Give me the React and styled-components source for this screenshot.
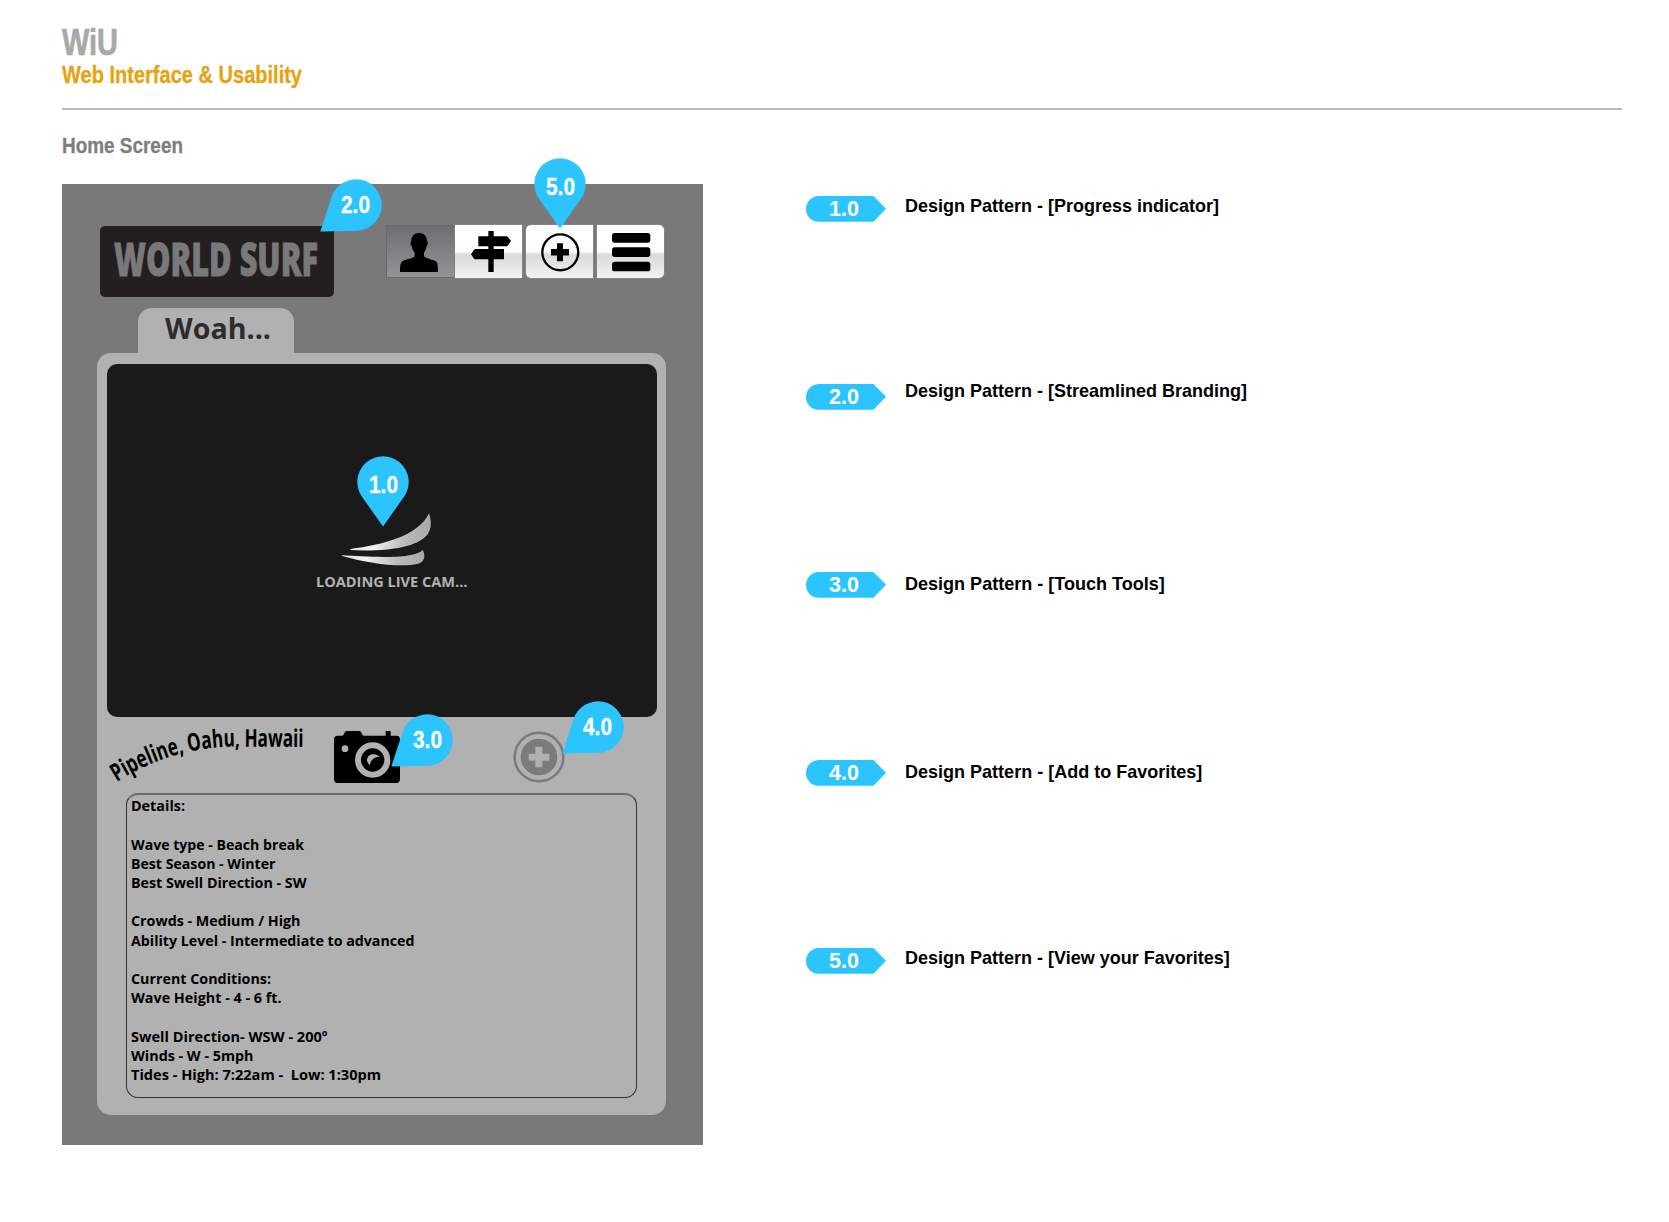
import React, { useLayoutEffect, useRef, useState } from "react";
import styled, { createGlobalStyle } from "styled-components";

const GlobalStyle = createGlobalStyle`
  * { box-sizing: border-box; }
  body { margin: 0; background: #fff; font-family: "Liberation Sans", Arial, sans-serif; font-weight: 700; }
  svg { display: block; overflow: visible; }
  h1, h2, h3, p { margin: 0; font: inherit; }
`;

const humanist = `"Open Sans", "Noto Sans", sans-serif`;

/* Condenses or widens a line of text to a given measure. */
const FitBox = styled.span`
  display: block;
  width: ${(p) => p.$width}px;
  white-space: pre;
`;
const FitInner = styled.span`
  display: inline-block;
  transform-origin: 0 50%;
  vertical-align: top;
`;
function Fit({ width, children }) {
  const ref = useRef(null);
  const [scale, setScale] = useState(1);
  useLayoutEffect(() => {
    const measure = () => {
      const box = getComputedStyle(ref.current);
      setScale(width / parseFloat(box.width));
    };
    measure();
    document.fonts?.ready.then(measure);
  }, [width, children]);
  return (
    <FitBox $width={width}>
      <FitInner ref={ref} style={{ transform: `scaleX(${scale})` }}>{children}</FitInner>
    </FitBox>
  );
}

const Page = styled.div`
  width: 1669px;
  height: 1222px;
  padding: 22px 47px 0 62px;
  overflow: hidden;
`;
const Header = styled.header`
  border-bottom: 2px solid #bababa;
  padding-bottom: 20px;
`;
const Brand = styled.h1`
  font-size: 37.8px;
  line-height: 40px;
  color: #a8a8a8;
  -webkit-text-stroke: 0.7px #a8a8a8;
`;
const Subtitle = styled.h2`
  font-size: 23px;
  line-height: 26px;
  color: #e6a311;
  -webkit-text-stroke: 0.3px #e6a311;
`;
const ScreenTitle = styled.h3`
  margin: 23px 0 25.4px;
  font-size: 22.4px;
  line-height: 26px;
  color: #7e7e7e;
  -webkit-text-stroke: 0.3px #7e7e7e;
`;
const Body = styled.main`
  display: flex;
  gap: 103.5px;
`;

const Phone = styled.section`
  position: relative;
  width: 640.5px;
  height: 960.6px;
  padding: 41px 0 0 35px;
  background: #797979;
`;
const TopBar = styled.div`
  display: flex;
  align-items: flex-start;
  height: 83px;
  padding-left: 3.2px;
`;
const Logo = styled.div`
  width: 234px;
  height: 71px;
  margin: 0.6px 51.4px 0 0;
  padding-left: 14px;
  border-radius: 5px;
  background: #231f20;
  color: #797979;
  font: 800 45.7px/64px ${humanist};
  -webkit-text-stroke: 0.9px #797979;
`;
const Tools = styled.nav`
  display: flex;
  gap: 4px;
`;
const ToolGroup = styled.div`
  display: flex;
`;
const Tool = styled.button`
  display: flex;
  align-items: flex-start;
  width: ${(p) => p.$width || 67}px;
  height: 52.6px;
  padding: ${(p) => p.$pad};
  border: 0;
  border-radius: ${(p) => p.$radius || "0"};
  background: ${(p) =>
    p.$active
      ? "linear-gradient(#6d6e70, #929497)"
      : "linear-gradient(#fff 0%, #fdfdfd 50%, #dadadb 56%, #e4e4e5 75%, #f3f3f4 100%)"};
  box-shadow: ${(p) => (p.$active ? "inset 0 0 0 1px #68696b" : "0 0 0 0.5px #939393")};
`;

const Tab = styled.div`
  width: 156.5px;
  height: 45px;
  margin-left: 40.8px;
  padding: 0.6px 0 0 26.8px;
  border-radius: 14px 14px 0 0;
  background: #b1b1b1;
  color: #2d2d2d;
  font: 700 29.4px/38px ${humanist};
`;
const Card = styled.div`
  width: 568.6px;
  height: 761.6px;
  padding: 10.3px 9px 0 9.6px;
  border-radius: 14px;
  background: #b1b1b1;
`;
const Cam = styled.div`
  width: 550px;
  height: 353.5px;
  padding: 148px 0 0 210px;
  border-radius: 10px;
  background: #1a1a1a;
`;
const Loading = styled.div`
  margin: 4.7px 0 0 -0.2px;
  color: #b1b1b1;
  font: 700 14.8px/20px ${humanist};
`;
const WaveSlot = styled.div`
  padding-left: 24.3px;
`;
const Actions = styled.div`
  display: flex;
  align-items: flex-start;
  height: 76px;
`;
const Slot = styled.div`
  padding: ${(p) => p.$top}px 0 0 ${(p) => p.$left || 0}px;
`;
const Details = styled.div`
  width: 511px;
  height: 305px;
  margin-left: 19.4px;
  padding: 0.9px 0 0 4px;
  border: 1px solid #333;
  border-top: 2px solid #6c6c6c;
  border-radius: 12px;
  color: #000;
  font: 700 15px/19.22px ${humanist};
`;
const DetailLine = styled.p`
  height: 19.22px;
`;

const PinBox = styled.div`
  position: absolute;
  left: ${(p) => p.$x - 26}px;
  top: ${(p) => p.$y - 26}px;
  width: 52px;
  height: 52px;
`;
const PinShape = styled.svg`
  position: absolute;
  inset: 0;
  transform: rotate(${(p) => p.$turn}deg);
`;
const PinLabel = styled.div`
  position: relative;
  padding: ${(p) => p.$top}px 0 0 11.3px;
  color: #fff;
  font-size: 23px;
  line-height: 26px;
  -webkit-text-stroke: 0.3px #fff;
`;
function Pin({ x, y, turn = 0, label }) {
  return (
    <PinBox $x={x} $y={y}>
      <PinShape $turn={turn} width="52" height="52" viewBox="-26 -26 52 52">
        <path d="M0 44.5L-21 14.8A25.7 25.7 0 1 1 21 14.8Z" fill="#2bc4ff" />
      </PinShape>
      <PinLabel $top={turn ? 12.8 : 16}><Fit width={29}>{label}</Fit></PinLabel>
    </PinBox>
  );
}

const Legend = styled.section`
  padding-top: 11.6px;
`;
const LegendRow = styled.div`
  display: flex;
  height: 188px;
`;
const Tag = styled.div`
  width: 80px;
  height: 25.7px;
  padding: 0 0 0 23.3px;
  border-radius: 13px 0 0 13px;
  background: #2bc4ff;
  clip-path: polygon(0 0, 67.5px 0, 100% 50%, 67.5px 100%, 0 100%);
  color: #fff;
  font-size: 21.6px;
  line-height: 26.8px;
`;
const Pattern = styled.p`
  margin: ${(p) => p.$top}px 0 0 18.6px;
  font-size: 18.2px;
  line-height: 20px;
  color: #000;
`;

const PersonIcon = () => (
  <svg width="38" height="39" viewBox="90 248 114 117">
    <path d="M147 248C162 248 171 258 171 272C174 273 174 284 170 288C168 297 165 303 162 307V318C172 326 190 328 198 333C204 339 204 352 204 365H90C90 352 90 339 97 333C106 327 124 326 134 318V307C130 303 127 297 125 288C121 284 121 273 124 272C124 258 132 248 147 248Z" />
  </svg>
);
const SignIcon = () => (
  <svg width="40" height="41" viewBox="303 242 120 123">
    <path d="M355 242H371V258H409Q412 258 414 260L423 272L414 285Q412 288 409 288H371V296H402V327H371V365H355V327H317Q314 327 312 325L303 312L312 298Q314 296 317 296H355V288H325V258H355Z" />
  </svg>
);
const CirclePlusIcon = () => (
  <svg width="38.6" height="38.6" viewBox="513 247 116 116">
    <circle cx="571" cy="305" r="54" fill="none" stroke="#000" strokeWidth="7" />
    <path d="M561 278H579V295H597V315H579V332H561V315H543V295H561Z" />
  </svg>
);
const MenuIcon = () => (
  <svg width="38.3" height="38.3" viewBox="726 248 115 115">
    {[248, 291, 334].map((y) => <rect key={y} x="726" y={y} width="115" height="29" rx="8" />)}
  </svg>
);
const WaveLogo = () => (
  <svg width="90.7" height="54.7" viewBox="120 215 272 164">
    <defs>
      <linearGradient id="silver" x1="0" x2="1">
        <stop offset="0" stopColor="#e2e2e2" />
        <stop offset="0.3" stopColor="#f0f0f0" />
        <stop offset="0.65" stopColor="#bcbcbc" />
        <stop offset="1" stopColor="#a9a9a9" />
      </linearGradient>
    </defs>
    <path fill="url(#silver)" d="M148 326C245 314 352 287 384 219C392 243 392 265 379 283C345 325 240 334 148 329Z" />
    <path fill="url(#silver)" d="M123 345C200 349 340 359 365 328C374 345 372 363 352 370C300 382 210 371 123 347Z" />
  </svg>
);
const SpotText = styled.text`
  font: 700 74px ${humanist};
`;
const SpotName = () => (
  <svg width="198.5" height="63.3" viewBox="49.5 60 595.5 190">
    <path id="arc" fill="none" d="M79 246C196 170 330 138 440 140L650 141" />
    <SpotText>
      <textPath href="#arc" textLength="581" lengthAdjust="spacingAndGlyphs">Pipeline, Oahu, Hawaii</textPath>
    </SpotText>
  </svg>
);
const CameraIcon = () => (
  <svg width="66" height="52" viewBox="42 121 198 156">
    <path d="M53 135H66Q70 135 72 130Q74 121 82 121H116Q124 121 126 130Q127 135 132 135H197V121H212V135H229Q240 135 240 146V266Q240 277 229 277H53Q42 277 42 266V146Q42 135 53 135Z" />
    <circle cx="75" cy="174" r="10" fill="#b1b1b1" />
    <circle cx="158" cy="208" r="44" fill="none" stroke="#b1b1b1" strokeWidth="18" />
    <path fill="#b1b1b1" d="M150 224C136 213 139 195 156 191C166 189 175 193 178 199C163 198 151 208 150 224Z" />
  </svg>
);
const FavoriteIcon = () => (
  <svg width="52" height="52" viewBox="579 122 156 156">
    <circle cx="657" cy="200" r="73" fill="none" stroke="#7b7b7b" strokeWidth="7.5" />
    <circle cx="657" cy="200" r="55" fill="#7b7b7b" />
    <path fill="#b1b1b1" d="M646 169H667V190H688V211H667V231H646V211H626V190H646Z" />
  </svg>
);

const details = [
  ["Details:", 54],
  null,
  ["Wave type - Beach break", 173],
  ["Best Season - Winter", 144.5],
  ["Best Swell Direction - SW", 175.5],
  null,
  ["Crowds - Medium / High", 169.5],
  ["Ability Level - Intermediate to advanced", 283.5],
  null,
  ["Current Conditions:", 140],
  ["Wave Height - 4 - 6 ft.", 150.5],
  null,
  ["Swell Direction- WSW - 200º", 196.5],
  ["Winds - W - 5mph", 122.5],
  ["Tides - High: 7:22am -  Low: 1:30pm", 250],
];

const patterns = [
  ["1.0", "Progress indicator", 314, 0.1],
  ["2.0", "Streamlined Branding", 342, -2.6],
  ["3.0", "Touch Tools", 259.7, 2.1],
  ["4.0", "Add to Favorites", 297.3, 2.1],
  ["5.0", "View your Favorites", 324.7, 0.1],
];

export default function App() {
  return (
    <Page>
      <GlobalStyle />
      <Header>
        <Brand><Fit width={56}>WiU</Fit></Brand>
        <Subtitle><Fit width={240}>Web Interface &amp; Usability</Fit></Subtitle>
      </Header>
      <ScreenTitle><Fit width={121}>Home Screen</Fit></ScreenTitle>
      <Body>
        <Phone>
          <TopBar>
            <Logo><Fit width={204}>WORLD SURF</Fit></Logo>
            <Tools>
              <ToolGroup>
                <Tool $active $width={69} $pad="7.8px 0 0 14.2px"><PersonIcon /></Tool>
                <Tool $pad="5.8px 0 0 16.6px"><SignIcon /></Tool>
              </ToolGroup>
              <Tool $radius="5px 0 0 5px" $pad="7.7px 0 0 15.8px"><CirclePlusIcon /></Tool>
              <Tool $radius="0 5px 5px 0" $pad="7.6px 0 0 15.5px"><MenuIcon /></Tool>
            </Tools>
          </TopBar>
          <Tab><Fit width={106}>Woah...</Fit></Tab>
          <Card>
            <Cam>
              <WaveSlot><WaveLogo /></WaveSlot>
              <Loading><Fit width={151.5}>LOADING LIVE CAM...</Fit></Loading>
            </Cam>
            <Actions>
              <Slot $top={3}><SpotName /></Slot>
              <Slot $top={13.6} $left={28.9}><CameraIcon /></Slot>
              <Slot $top={14} $left={113}><FavoriteIcon /></Slot>
            </Actions>
            <Details>
              {details.map((line, i) => (
                <DetailLine key={i}>{line && <Fit width={line[1]}>{line[0]}</Fit>}</DetailLine>
              ))}
            </Details>
          </Card>
          <Pin x={321.4} y={297.9} label="1.0" />
          <Pin x={293.5} y={20.5} turn={53.3} label="2.0" />
          <Pin x={365.3} y={555.8} turn={53.3} label="3.0" />
          <Pin x={535.6} y={542.9} turn={53.3} label="4.0" />
          <Pin x={498.4} y={-0.2} label="5.0" />
        </Phone>
        <Legend>
          {patterns.map(([id, name, width, top]) => (
            <LegendRow key={id}>
              <Tag><Fit width={30}>{id}</Fit></Tag>
              <Pattern $top={top}><Fit width={width}>{`Design Pattern - [${name}]`}</Fit></Pattern>
            </LegendRow>
          ))}
        </Legend>
      </Body>
    </Page>
  );
}
